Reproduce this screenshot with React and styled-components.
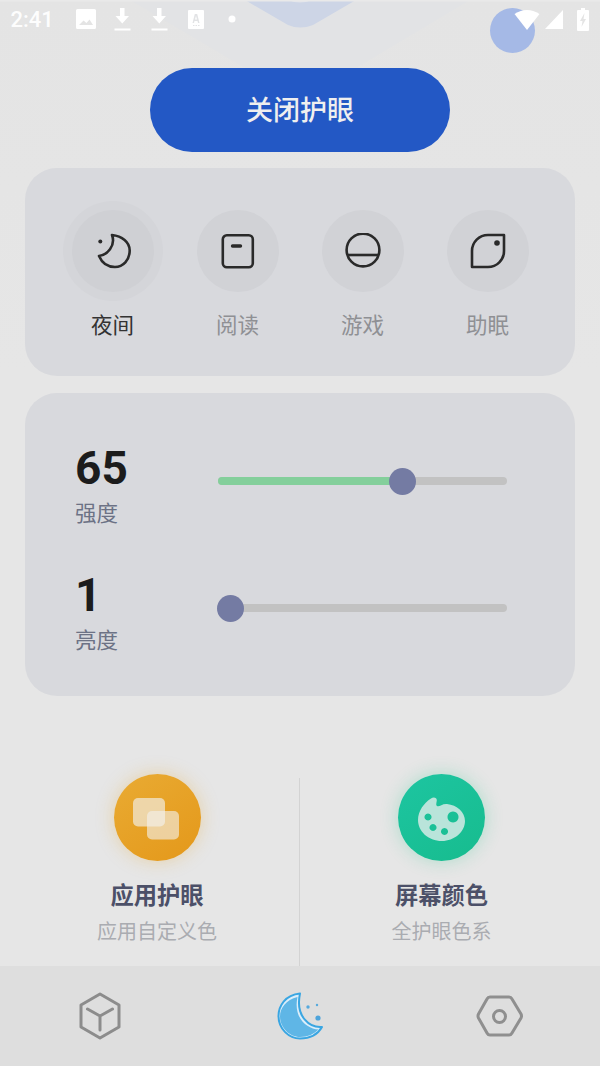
import React from "react";
import styled, { createGlobalStyle } from "styled-components";

const GlobalStyle = createGlobalStyle`
  html, body {
    margin: 0;
    padding: 0;
    background: #e6e6e6;
    font-family: "Noto Sans CJK SC", "Noto Sans", sans-serif;
  }
`;

const Page = styled.div`
  position: relative;
  width: 600px;
  height: 1066px;
  overflow: hidden;
  display: flex;
  flex-direction: column;
  background: linear-gradient(to bottom, #e4e4e4 0%, #e6e6e6 35%);
`;

// faint hexagons behind the status bar
const TopArt = styled.svg`
  position: absolute;
  left: 0;
  top: 0;
  width: 600px;
  height: 80px;
`;

const FloatBall = styled.div`
  position: absolute;
  left: 490px;
  top: 8px;
  width: 45px;
  height: 45px;
  border-radius: 50%;
  background: #a5b9e6;
`;

const StatusBar = styled.div`
  position: relative;
  height: 38px;
  display: flex;
  align-items: center;
  color: #fff;
`;

const Clock = styled.span`
  font-family: Roboto, sans-serif;
  font-size: 22px;
  font-weight: 500;
  margin-left: 10.5px;
  width: 65.5px;
  line-height: 38px;
  position: relative;
  top: 1px;
  color: rgba(255, 255, 255, 0.95);
`;

const StatusIcon = styled.svg`
  display: block;
  flex: none;
  margin-left: ${(p) => p.$left || 0}px;
  fill: #fff;
`;

const CloseWrap = styled.div`
  position: relative;
  display: flex;
  justify-content: center;
  margin-top: 30px;
`;

const CloseButton = styled.button`
  width: 300px;
  height: 84px;
  border: none;
  border-radius: 42px;
  background: #2358c5;
  color: #efefef;
  font-family: inherit;
  font-size: 27px;
  font-weight: 500;
  padding: 0 0 4px;
`;

const Card = styled.section`
  margin: 0 25px;
  border-radius: 32px;
  background: #d8d9dd;
`;

const ModeCard = styled(Card)`
  margin-top: 16px;
  height: 208px;
  box-sizing: border-box;
  padding: 42px 0 0 46.5px;
  display: grid;
  grid-template-columns: repeat(4, 82px);
  column-gap: 43px;
  align-content: start;
`;

const Mode = styled.div`
  display: flex;
  flex-direction: column;
  align-items: center;
`;

const ModeCircle = styled.div`
  width: 82px;
  height: 82px;
  border-radius: 50%;
  background: ${(p) => (p.$active ? "#cfd0d4" : "#d1d2d6")};
  display: flex;
  align-items: center;
  justify-content: center;
  box-shadow: ${(p) => (p.$active ? "0 0 0 9px #d4d5d9" : "none")};
`;

const ModeLabel = styled.span`
  margin-top: 16px;
  font-size: 21.5px;
  line-height: 32px;
  color: ${(p) => (p.$active ? "#333" : "#8f9094")};
`;

const SliderCard = styled(Card)`
  margin-top: 17px;
  height: 303px;
  box-sizing: border-box;
  padding: 48px 68px 0 50px;
  display: flex;
  flex-direction: column;
  gap: 23px;
`;

const SliderRow = styled.div`
  display: flex;
  height: 104px;
`;

const Reading = styled.div`
  width: 143px;
  flex: none;
`;

const Value = styled.div`
  font-family: Roboto, sans-serif;
  font-weight: 700;
  font-size: 46px;
  line-height: 54px;
  color: #1c1c1c;
`;

const ValueLabel = styled.div`
  margin-top: 1px;
  font-size: 21.5px;
  line-height: 32px;
  color: #6c7285;
`;

const Track = styled.div`
  position: relative;
  align-self: flex-start;
  margin-top: 36px;
  width: 289px;
  height: 8px;
  border-radius: 4px;
  background: #c2c2c2;
`;

const TrackFill = styled.div`
  height: 100%;
  border-radius: 4px;
  background: #84cf9b;
`;

const Thumb = styled.div`
  position: absolute;
  top: -9.5px;
  width: 27px;
  height: 27px;
  margin-left: -13.5px;
  border-radius: 50%;
  background: #747ba3;
`;

const Actions = styled.div`
  margin-top: 78px;
  height: 192px;
  display: grid;
  grid-template-columns: 299px 1px 300px;
`;

const Action = styled.div`
  display: flex;
  flex-direction: column;
  align-items: center;
  padding: ${(p) => p.$pad || 0};
`;

const ActionCircle = styled.div`
  width: 87px;
  height: 87px;
  box-sizing: border-box;
  padding-top: 3px;
  border-radius: 50%;
  display: flex;
  align-items: center;
  justify-content: center;
  background: ${(p) => p.$bg};
  box-shadow: 0 0 18px ${(p) => p.$glow};
`;

const ActionTitle = styled.div`
  margin-top: 16px;
  font-size: 23.3px;
  font-weight: 700;
  line-height: 34px;
  color: #4c5068;
`;

const ActionSub = styled.div`
  margin-top: 5px;
  font-size: 20px;
  line-height: 30px;
  color: #aaacb1;
`;

const Divider = styled.div`
  margin-top: 4px;
  background: #d3d3d3;
`;

const TabBar = styled.nav`
  height: 100px;
  display: grid;
  grid-template-columns: 200px 200px 200px;
  justify-items: center;
  align-items: center;
  background: #dedede;
`;

function MoonIcon() {
  return (
    <svg width="36" height="36" viewBox="0 0 36 36" fill="none" stroke="#2a2a2a" strokeWidth="2.6" strokeLinejoin="round">
      <path d="M17 2 C27 3 34.7 9 34.7 17.5 C34.7 27 28 34 20 34 C13 34 7 30 4 23 C12 22 21 13 17 2 Z" />
      <circle cx="5.3" cy="8.5" r="2" fill="#2a2a2a" stroke="none" />
    </svg>
  );
}

function BookIcon() {
  return (
    <svg width="36" height="36" viewBox="0 0 36 36" fill="none" stroke="#2a2a2a" strokeWidth="2.6">
      <rect x="2.8" y="2.3" width="30" height="32" rx="4" />
      <path d="M12.5 13 H20.5" strokeWidth="3.4" strokeLinecap="round" />
    </svg>
  );
}

function GameIcon() {
  return (
    <svg width="36" height="36" viewBox="0 0 36 36" fill="none" stroke="#2a2a2a" strokeWidth="2.6">
      <circle cx="18" cy="17" r="16.4" />
      <path d="M2 22 H34" />
    </svg>
  );
}

function SleepIcon() {
  return (
    <svg width="36" height="36" viewBox="0 0 36 36" fill="none" stroke="#2a2a2a" strokeWidth="2.6" strokeLinejoin="round">
      <path d="M34 2 V18 A16 16 0 0 1 18 34 H2 V18 A16 16 0 0 1 18 2 Z" />
      <circle cx="27" cy="10" r="2.8" fill="#2a2a2a" stroke="none" />
    </svg>
  );
}

function LayersIcon() {
  return (
    <svg width="48" height="43" viewBox="0 0 48 43" fill="#f2f0ec">
      <rect x="0" y="0" width="32" height="28.5" rx="5" opacity="0.66" />
      <rect x="14" y="13" width="32" height="28.5" rx="5" opacity="0.62" />
    </svg>
  );
}

function PaletteIcon() {
  return (
    <svg width="47" height="44" viewBox="0 0 47 44">
      <path
        fill="#b9e4da"
        fillRule="evenodd"
        d="M13 1.5 C15.5 -0.2 19 0.5 18.8 3.5 C18.6 6 17.5 7.5 19 9 C21 10.5 24 6.5 29 7 C39 8 47 15 47 24 C47 35 36 44 24 44 C10 44 0 34 0 23 C0 14 6 6 13 1.5 Z
           M10 16.5 a3.5 3.5 0 1 0 0.01 0 Z
           M35 14.5 a5.5 5.5 0 1 0 0.01 0 Z
           M15 27 a3.5 3.5 0 1 0 0.01 0 Z
           M26.5 31 a3.5 3.5 0 1 0 0.01 0 Z"
      />
    </svg>
  );
}

function CubeIcon() {
  return (
    <svg width="44" height="48" viewBox="0 0 44 48" fill="none" stroke="#8c8c8c" strokeWidth="3" strokeLinejoin="round" strokeLinecap="round">
      <path d="M22 2 L41 13 V35 L22 46 L3 35 V13 Z" />
      <path d="M9.5 17 L22 24 L34.5 17 M22 24 V38" />
    </svg>
  );
}

function NightTabIcon() {
  return (
    <svg width="48" height="50" viewBox="0 0 48 50">
      <path d="M24 2.5 C9 4 2.5 15 2.5 25 C2.5 38 13 47.5 24 47.5 C34 47.5 42 43 46 36 C34 37 19 26 24 2.5 Z" fill="#dceefa" stroke="#3aa6e2" strokeWidth="2" strokeLinejoin="round" />
      <path d="M21.5 6 C10 9 4 17 4 25.5 C4 37 14 46 24 46 C32 46 38 43 42.5 38.5 C31 38 17 27 21.5 6 Z" fill="#5fb6e6" />
      <circle cx="32" cy="16" r="1.7" fill="#55a9dd" />
      <circle cx="41" cy="14" r="1.2" fill="#55a9dd" />
      <circle cx="42" cy="27" r="2.6" fill="#4da4db" />
    </svg>
  );
}

function GearIcon() {
  return (
    <svg width="48" height="44" viewBox="0 0 48 44" fill="none" stroke="#8f8f8f" strokeWidth="3" strokeLinejoin="round">
      <path d="M14 3 H33 Q35 3 36 5 L45 20 Q46 22 45 24 L36 39 Q35 41 33 41 H14 Q12 41 11 39 L2.5 24 Q1.5 22 2.5 20 L11 5 Q12 3 14 3 Z" />
      <circle cx="23.5" cy="22.5" r="6" />
    </svg>
  );
}

function StatusIcons() {
  return (
    <>
      <StatusIcon $left={0} width="20" height="20" viewBox="0 0 20 20">
        <path fillRule="evenodd" d="M1.5 0 H18.5 Q20 0 20 1.5 V18.5 Q20 20 18.5 20 H1.5 Q0 20 0 18.5 V1.5 Q0 0 1.5 0 Z M3 16 H17 L13.5 10.5 L10.5 14 L7.5 11.5 Z" />
      </StatusIcon>
      <StatusIcon $left={18} width="17" height="23" viewBox="0 0 17 23">
        <path d="M6 0 H10.5 V8 H15 L8.3 15.5 L1.5 8 H6 Z M0.5 20.5 H16.5 V22.5 H0.5 Z" />
      </StatusIcon>
      <StatusIcon $left={20} width="17" height="23" viewBox="0 0 17 23">
        <path d="M6 0 H10.5 V8 H15 L8.3 15.5 L1.5 8 H6 Z M0.5 20.5 H16.5 V22.5 H0.5 Z" />
      </StatusIcon>
      <StatusIcon $left={20} width="16" height="19" viewBox="0 0 16 19">
        <path fillRule="evenodd" d="M1 0 H15 Q16 0 16 1 V18 Q16 19 15 19 H1 Q0 19 0 18 V1 Q0 0 1 0 Z M6.8 4 L4.5 13 H6 L6.5 11 H9.5 L10 13 H11.5 L9.2 4 Z M7 9.6 L8 5.8 L9 9.6 Z M5 15 H6.5 V16 H5 Z M7.5 15 H9 V16 H7.5 Z M10 15 H11.5 V16 H10 Z" />
      </StatusIcon>
      <StatusIcon $left={24} width="8" height="8" viewBox="0 0 8 8">
        <circle cx="4" cy="4" r="3.5" />
      </StatusIcon>
      <StatusIcon $left={278} width="26" height="21" viewBox="0 0 26 21">
        <path d="M0.5 5 Q13 -3 25.5 5 L13 21 Z" />
      </StatusIcon>
      <StatusIcon $left={5} width="18" height="19" viewBox="0 0 18 19">
        <path d="M18 0 V19 H0 Z" />
      </StatusIcon>
      <StatusIcon $left={14} width="12" height="23" viewBox="0 0 12 23">
        <path fillRule="evenodd" d="M4 0 H8 V2 H11 Q12 2 12 3 V22 Q12 23 11 23 H1 Q0 23 0 22 V3 Q0 2 1 2 H4 Z M7.5 5 L3 13 H5.5 L4.5 19 L9 11 H6.5 Z" />
      </StatusIcon>
    </>
  );
}

const modes = [
  { name: "夜间", icon: <MoonIcon />, active: true },
  { name: "阅读", icon: <BookIcon /> },
  { name: "游戏", icon: <GameIcon /> },
  { name: "助眠", icon: <SleepIcon /> },
];

const sliders = [
  { value: 65, label: "强度", thumb: 184, fill: 175 },
  { value: 1, label: "亮度", thumb: 12.5, fill: 0 },
];

export default function App() {
  return (
    <Page>
      <GlobalStyle />
      <TopArt viewBox="0 0 600 80">
        <path d="M130 0 H470 L356 68 H245 Z" fill="#e2e3e5" />
        <path d="M245 0 H356 L313 25 Q300 30 288 25 Z" fill="#cdd5e6" />
        <path d="M288 0 H312 Q300 5 288 0 Z" fill="#e0e3ea" />
        <path d="M0 0 H600 V1.5 H0 Z" fill="#e9e9e9" />
      </TopArt>
      <FloatBall />
      <StatusBar>
        <Clock>2:41</Clock>
        <StatusIcons />
      </StatusBar>

      <CloseWrap>
        <CloseButton>关闭护眼</CloseButton>
      </CloseWrap>

      <ModeCard>
        {modes.map((m) => (
          <Mode key={m.name}>
            <ModeCircle $active={m.active}>{m.icon}</ModeCircle>
            <ModeLabel $active={m.active}>{m.name}</ModeLabel>
          </Mode>
        ))}
      </ModeCard>

      <SliderCard>
        {sliders.map((s) => (
          <SliderRow key={s.label}>
            <Reading>
              <Value>{s.value}</Value>
              <ValueLabel>{s.label}</ValueLabel>
            </Reading>
            <Track>
              <TrackFill style={{ width: s.fill }} />
              <Thumb style={{ left: s.thumb }} />
            </Track>
          </SliderRow>
        ))}
      </SliderCard>

      <Actions>
        <Action $pad="0 0 0 15px">
          <ActionCircle $bg="linear-gradient(145deg, #e9ab33, #e4981a)" $glow="rgba(232, 170, 50, 0.35)">
            <LayersIcon />
          </ActionCircle>
          <ActionTitle>应用护眼</ActionTitle>
          <ActionSub>应用自定义色</ActionSub>
        </Action>
        <Divider />
        <Action $pad="0 17px 0 0">
          <ActionCircle $bg="linear-gradient(145deg, #1dc5a1, #17bc8e)" $glow="rgba(40, 200, 140, 0.3)">
            <PaletteIcon />
          </ActionCircle>
          <ActionTitle>屏幕颜色</ActionTitle>
          <ActionSub>全护眼色系</ActionSub>
        </Action>
      </Actions>

      <TabBar>
        <CubeIcon />
        <NightTabIcon />
        <GearIcon />
      </TabBar>
    </Page>
  );
}
